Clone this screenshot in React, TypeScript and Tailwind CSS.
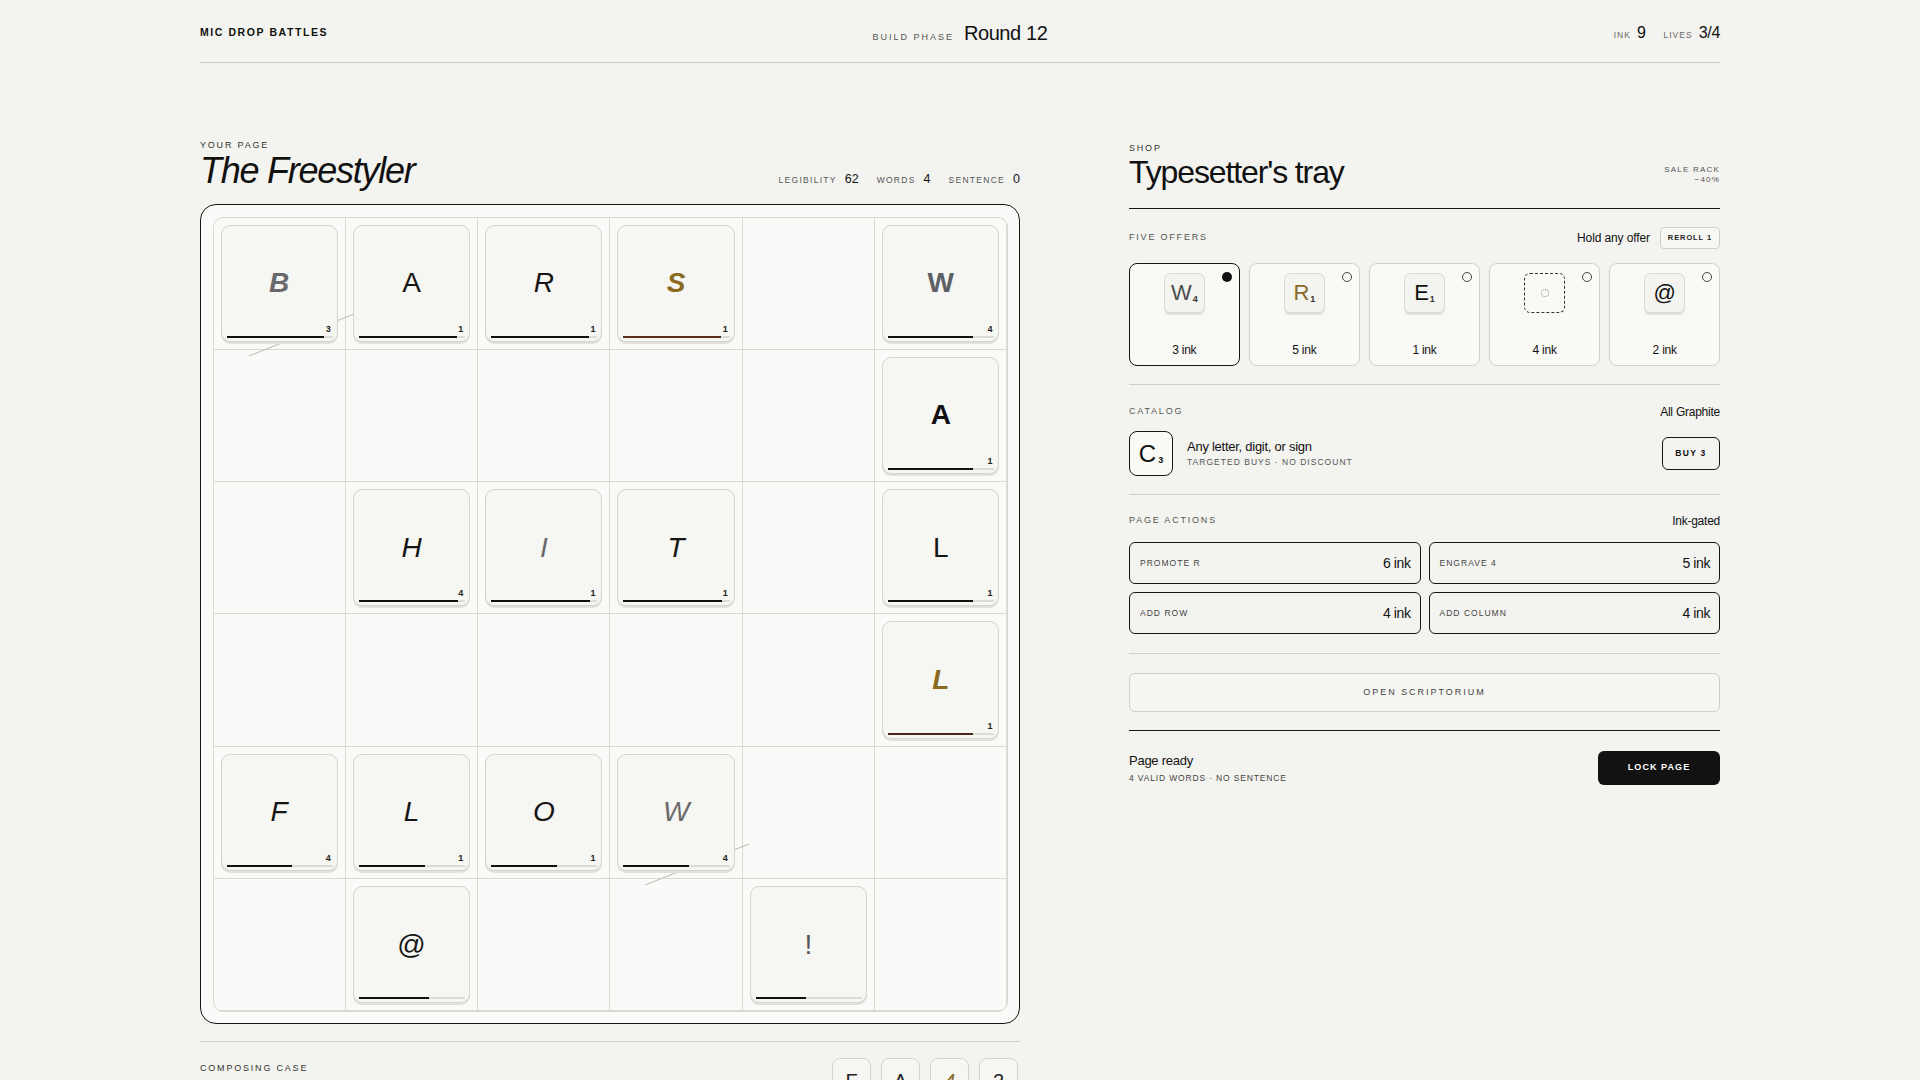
import React from 'react';

type Tile = { ch: string; cls: string; fill: number; score?: number; bar?: string };

const t = (ch: string, cls: string, fill: number, score?: number, bar?: string): Tile => ({ ch, cls, fill, score, bar });

const board: (Tile | null)[][] = [
  [
    t('B', 'font-bold italic text-[#69696b]', 92, 3),
    t('A', 'text-[#151515]', 92, 1),
    t('R', 'italic text-[#151515]', 92, 1),
    t('S', 'font-bold italic text-[#8a6a1f]', 92, 1, 'bg-[#5b2f1c]'),
    null,
    t('W', 'font-bold text-[#5d6064]', 80, 4),
  ],
  [null, null, null, null, null, t('A', 'font-bold text-[#111]', 80, 1)],
  [null, t('H', 'italic text-[#151515]', 93, 4), t('I', 'italic text-[#6a6a6a]', 93, 1), t('T', 'italic text-[#151515]', 93, 1), null, t('L', 'text-[#151515]', 80, 1)],
  [null, null, null, null, null, t('L', 'font-bold italic text-[#8a6a1f]', 80, 1, 'bg-[#4a2a1c]')],
  [t('F', 'italic text-[#151515]', 62, 4), t('L', 'italic text-[#151515]', 62, 1), t('O', 'italic text-[#151515]', 62, 1), t('W', 'italic text-[#6b6b6b]', 62, 4), null, null],
  [null, t('@', 'text-[#151515]', 66), null, null, t('!', 'text-[#555]', 47), null],
];

const offers = [
  { ch: 'W', sub: '4', cls: 'text-[#4d4d4d]', cost: 3, sel: true },
  { ch: 'R', sub: '1', cls: 'text-[#8a6a2b]', cost: 5 },
  { ch: 'E', sub: '1', cls: 'text-[#111]', cost: 1 },
  { ch: '', sub: '', cls: '', cost: 4, blank: true },
  { ch: '@', sub: '', cls: 'text-[#111]', cost: 2 },
];

const actions = [
  { label: 'PROMOTE R', cost: '6 ink' },
  { label: 'ENGRAVE 4', cost: '5 ink' },
  { label: 'ADD ROW', cost: '4 ink' },
  { label: 'ADD COLUMN', cost: '4 ink' },
];

function BoardTile({ tile }: { tile: Tile }) {
  return (
    <div className="relative z-10 h-full rounded-[9px] border border-[#d4d4cf] bg-[#f6f6f2] shadow-[0_2px_0_#e1e1dc]">
      <div className={`flex h-full items-center justify-center text-[28px] leading-none ${tile.cls}`}>{tile.ch}</div>
      {tile.score !== undefined && (
        <span className="absolute bottom-[7px] right-[6px] text-[9px] font-bold leading-none text-[#222]">{tile.score}</span>
      )}
      <div className="absolute bottom-[3px] left-[5px] right-[4px] h-[2px] bg-[#dcdcd7]">
        <div className={`h-full ${tile.bar ?? 'bg-[#111]'}`} style={{ width: `${tile.fill}%` }} />
      </div>
    </div>
  );
}

export default function App() {
  return (
    <div className="min-h-screen bg-[#f3f3ef] font-['Liberation_Sans',Arial,sans-serif] text-[#111]">
      <div className="mx-auto w-[1520px]">
        {/* top bar */}
        <header className="grid h-[63px] grid-cols-3 items-center border-b border-[#c9c9c4] pt-[3px]">
          <div className="text-[10.5px] font-bold tracking-[0.15em]">MIC DROP BATTLES</div>
          <div className="flex items-baseline justify-center gap-[10px]">
            <span className="text-[9px] tracking-[0.22em] text-[#555]">BUILD PHASE</span>
            <span className="text-[20px] tracking-[-0.02em]">Round 12</span>
          </div>
          <div className="flex items-baseline justify-end gap-[6px]">
            <span className="text-[8.5px] tracking-[0.12em] text-[#666]">INK</span>
            <span className="text-[16px] tracking-[-0.02em]">9</span>
            <span className="ml-[12px] text-[8.5px] tracking-[0.12em] text-[#666]">LIVES</span>
            <span className="text-[16px] tracking-[-0.02em]">3/4</span>
          </div>
        </header>

        <main className="grid grid-cols-[820px_591px] justify-between pt-[76px]">
          {/* left: page */}
          <section>
            <div className="text-[9px] leading-[12px] tracking-[0.2em] text-[#333]">YOUR PAGE</div>
            <div className="flex items-baseline justify-between">
              <h1 className="text-[36px] italic leading-[40px] tracking-[-0.035em]">The Freestyler</h1>
              <div className="flex items-baseline">
                <span className="text-[8.5px] tracking-[0.15em] text-[#555]">LEGIBILITY</span>
                <span className="ml-[8px] text-[12.5px]">62</span>
                <span className="ml-[18px] text-[8.5px] tracking-[0.15em] text-[#555]">WORDS</span>
                <span className="ml-[8px] text-[12.5px]">4</span>
                <span className="ml-[18px] text-[8.5px] tracking-[0.15em] text-[#555]">SENTENCE</span>
                <span className="ml-[8px] text-[12.5px]">0</span>
              </div>
            </div>

            <div className="relative mt-[13px] h-[820px] w-[820px] rounded-[16px] border-[1.5px] border-[#161616] bg-[#fafaf8] p-[11.5px]">
              <div className="grid h-full w-full grid-cols-6 grid-rows-6 gap-px overflow-hidden rounded-[10px] border border-[#dadad5] bg-[#dadad5]">
                {board.flatMap((row, r) =>
                  row.map((tile, c) => (
                    <div key={`${r}-${c}`} className="bg-[#fafaf8] p-[7px]">
                      {tile && <BoardTile tile={tile} />}
                    </div>
                  ))
                )}
              </div>
              <svg className="pointer-events-none absolute left-0 top-0 z-[5]" width="820" height="820">
                <line x1="48" y1="151" x2="153" y2="109" stroke="#b9b9b4" strokeWidth="1" />
                <line x1="444" y1="680" x2="548" y2="639" stroke="#b9b9b4" strokeWidth="1" />
              </svg>
            </div>

            <div className="mt-[17px] border-t border-[#cfcfca]" />
            <div className="flex items-start justify-between pt-[16px]">
              <div className="mt-[4px] text-[9px] tracking-[0.2em] text-[#333]">COMPOSING CASE</div>
              <div className="flex gap-[10px] pr-[2px]">
                {['F', 'A', '4', '2'].map((ch, i) => (
                  <div
                    key={i}
                    className={`flex h-[46px] w-[39px] items-center justify-center rounded-[8px] border border-[#d4d4cf] bg-[#f6f6f2] text-[20px] ${i === 2 ? 'italic text-[#8a6a2b]' : 'text-[#222]'}`}
                  >
                    {ch}
                  </div>
                ))}
              </div>
            </div>
          </section>

          {/* right: shop */}
          <section className="pt-[3px]">
            <div className="flex items-end justify-between border-b-[1.5px] border-[#161616] pb-[18px]">
              <div>
                <div className="text-[9px] leading-[12px] tracking-[0.2em] text-[#333]">SHOP</div>
                <h2 className="text-[32px] leading-[36px] tracking-[-0.035em]">Typesetter's tray</h2>
              </div>
              <div className="mb-[5px] text-right text-[8px] leading-[10px] tracking-[0.15em] text-[#555]">
                <div>SALE RACK</div>
                <div>−40%</div>
              </div>
            </div>

            <div className="mt-[18px] flex h-[22px] items-center justify-between">
              <span className="text-[9px] tracking-[0.2em] text-[#555]">FIVE OFFERS</span>
              <div className="flex items-center gap-[10px]">
                <span className="text-[12px] tracking-[-0.01em]">Hold any offer</span>
                <button className="h-[22px] rounded-[4px] border border-[#cfcfca] bg-[#f7f7f4] px-[7px] text-[7.5px] font-bold tracking-[0.12em] text-[#222]">
                  REROLL 1
                </button>
              </div>
            </div>

            <div className="mt-[14px] grid grid-cols-5 gap-[9.5px]">
              {offers.map((o, i) => (
                <div
                  key={i}
                  className={`relative flex h-[103px] flex-col items-center rounded-[8px] bg-[#f9f9f6] pt-[9px] ${o.sel ? 'border-[1.5px] border-[#161616]' : 'border border-[#d2d2cd]'}`}
                >
                  <span
                    className={`absolute right-[7px] top-[8px] h-[10px] w-[10px] rounded-full ${o.sel ? 'bg-[#111]' : 'border border-[#444]'}`}
                  />
                  {o.blank ? (
                    <div className="flex h-[40px] w-[41px] items-center justify-center rounded-[6px] border border-dashed border-[#333]">
                      <span className="h-[8px] w-[8px] rounded-full border border-dotted border-[#888]" />
                    </div>
                  ) : (
                    <div className="flex h-[40px] w-[41px] items-center justify-center rounded-[6px] border border-[#dcdcd7] bg-[#f3f3ef] shadow-[0_2px_0_#e1e1dc]">
                      <span className={`text-[22px] leading-none ${o.cls}`}>{o.ch}</span>
                      {o.sub && <span className="ml-[1px] mt-[13px] text-[9px] font-bold leading-none text-[#333]">{o.sub}</span>}
                    </div>
                  )}
                  <span className="mt-auto mb-[6px] text-[12px] tracking-[-0.02em]">{o.cost} ink</span>
                </div>
              ))}
            </div>

            <div className="mt-[18px] border-t border-[#cfcfca]" />
            <div className="mt-[19px] flex h-[16px] items-center justify-between">
              <span className="text-[9px] tracking-[0.2em] text-[#555]">CATALOG</span>
              <span className="text-[12px] tracking-[-0.02em]">All Graphite</span>
            </div>
            <div className="mt-[11px] flex items-center justify-between">
              <div className="flex items-center gap-[14px]">
                <div className="flex h-[45px] w-[44px] items-center justify-center rounded-[8px] border-[1.5px] border-[#161616] bg-[#f9f9f6]">
                  <span className="text-[24px] leading-none">C</span>
                  <span className="ml-[2px] mt-[14px] text-[9px] font-bold leading-none">3</span>
                </div>
                <div>
                  <div className="text-[13px] leading-[16px] tracking-[-0.02em]">Any letter, digit, or sign</div>
                  <div className="mt-[1px] text-[8.5px] tracking-[0.12em] text-[#555]">TARGETED BUYS · NO DISCOUNT</div>
                </div>
              </div>
              <button className="h-[33px] w-[58px] rounded-[6px] border-[1.5px] border-[#161616] text-[8.5px] font-bold tracking-[0.15em]">
                BUY 3
              </button>
            </div>

            <div className="mt-[18px] border-t border-[#cfcfca]" />
            <div className="mt-[18px] flex h-[16px] items-center justify-between">
              <span className="text-[9px] tracking-[0.2em] text-[#555]">PAGE ACTIONS</span>
              <span className="text-[12px] tracking-[-0.02em]">Ink-gated</span>
            </div>
            <div className="mt-[13px] grid grid-cols-2 gap-[8px]">
              {actions.map((a) => (
                <button
                  key={a.label}
                  className="flex h-[42px] items-center justify-between rounded-[6px] border-[1.5px] border-[#161616] pl-[10px] pr-[9px]"
                >
                  <span className="text-[8.5px] tracking-[0.12em] text-[#444]">{a.label}</span>
                  <span className="text-[14px] tracking-[-0.03em]">{a.cost}</span>
                </button>
              ))}
            </div>

            <div className="mt-[19px] border-t border-[#cfcfca]" />
            <button className="mt-[19px] h-[39px] w-full rounded-[6px] border border-[#cfcfca] bg-[#f5f5f2] text-[9px] tracking-[0.22em] text-[#444]">
              OPEN SCRIPTORIUM
            </button>

            <div className="mt-[18px] border-t-[1.5px] border-[#161616]" />
            <div className="mt-[20px] flex items-center justify-between">
              <div>
                <div className="text-[13px] leading-[16px] tracking-[-0.02em]">Page ready</div>
                <div className="mt-[3px] text-[8.5px] leading-[12px] tracking-[0.1em] text-[#444]">4 VALID WORDS · NO SENTENCE</div>
              </div>
              <button className="h-[34px] w-[122px] rounded-[6px] bg-[#121212] text-[9px] font-bold tracking-[0.12em] text-white">
                LOCK PAGE
              </button>
            </div>
          </section>
        </main>
      </div>
    </div>
  );
}
